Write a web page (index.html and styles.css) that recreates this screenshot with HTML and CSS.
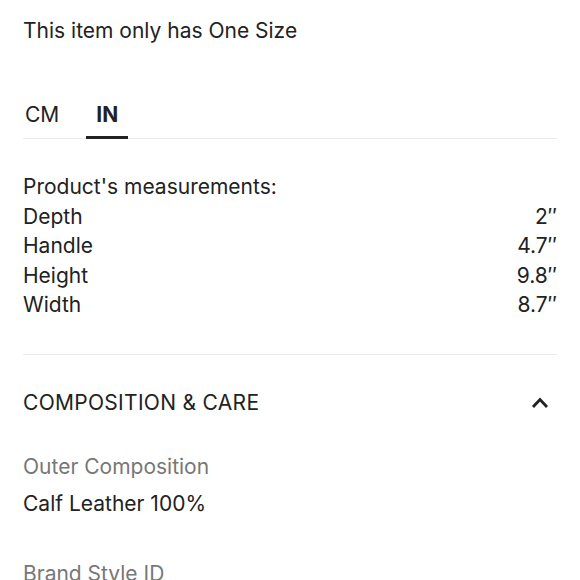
FILE: index.html
```html
<!DOCTYPE html>
<html>
<head>
<meta charset="utf-8">
<link rel="stylesheet" href="styles.css">
</head>
<body>
<div class="page">
  <p class="one-size">This item only has One Size</p>
  <div class="tabs">
    <div class="tab tab-cm">CM</div>
    <div class="tab tab-in active">IN</div>
  </div>
  <div class="measurements">
    <div class="m-title">Product's measurements:</div>
    <div class="m-row"><span>Depth</span><span>2″</span></div>
    <div class="m-row"><span>Handle</span><span>4.7″</span></div>
    <div class="m-row"><span>Height</span><span>9.8″</span></div>
    <div class="m-row"><span>Width</span><span>8.7″</span></div>
  </div>
  <div class="section-head">
    <span class="sh-title">COMPOSITION &amp; CARE</span>
    <svg class="chev" width="18" height="12" viewBox="0 0 18 12"><path d="M2 10 L9 2.5 L16 10" fill="none" stroke="#222" stroke-width="2.8"/></svg>
  </div>
  <div class="field">
    <div class="f-label">Outer Composition</div>
    <div class="f-value">Calf Leather 100%</div>
  </div>
  <div class="field field2">
    <div class="f-label">Brand Style ID</div>
  </div>
</div>
</body>
</html>
```
FILE: styles.css
```css
html, body { margin: 0; padding: 0; background: #fff; }
body { font-family: Inter, "Noto Sans", sans-serif; color: #222; font-size: 21px; }
.page { padding: 16px 23px 0 23px; width: 534px; }
.one-size { margin: 0; line-height: 30px; }
.tabs { display: flex; margin-top: 54px; border-bottom: 1px solid #ececec; }
.tab { line-height: 30px; padding-bottom: 6px; }
.tab-cm { padding-left: 2px; padding-right: 27px; }
.tab-in { padding: 0 10px 6px; font-weight: 700; border-bottom: 3px solid #222; margin-bottom: -1px; }
.measurements { margin-top: 33px; padding-bottom: 34px; border-bottom: 1px solid #ececec; }
.m-title, .m-row { line-height: 29.5px; }
.m-row { display: flex; justify-content: space-between; }
.section-head { display: flex; justify-content: space-between; align-items: center; margin-top: 33px; line-height: 30px; padding-right: 8px; }
.sh-title { letter-spacing: 0.3px; }
.field { margin-top: 34px; }
.f-label { color: #777; line-height: 30px; }
.f-value { line-height: 30px; margin-top: 7px; }
.field2 { margin-top: 40px; }
```
